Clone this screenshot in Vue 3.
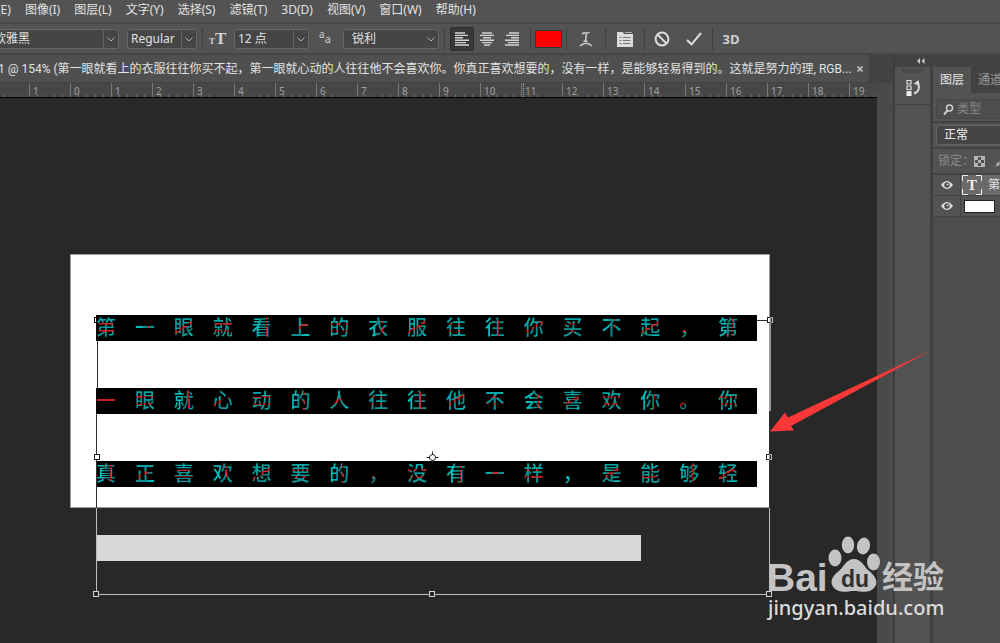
<template>
  <div class="app">
    <nav class="menu-bar">
      <button v-for="m in menus" :key="m" class="menu-item">{{ m }}</button>
    </nav>

    <div class="options-bar">
      <div class="drop family">
        <select aria-label="字体"><option>微软雅黑</option></select>
        <svg class="chevron" viewBox="0 0 8 5"><path d="M0.5 0.5L4 4L7.5 0.5" /></svg>
      </div>
      <div class="drop weight">
        <select aria-label="字体样式"><option>Regular</option></select>
        <svg class="chevron" viewBox="0 0 8 5"><path d="M0.5 0.5L4 4L7.5 0.5" /></svg>
      </div>
      <i class="sep"></i>
      <span class="size-icon"><small>T</small>T</span>
      <div class="drop size">
        <select aria-label="字号"><option>12 点</option></select>
        <svg class="chevron" viewBox="0 0 8 5"><path d="M0.5 0.5L4 4L7.5 0.5" /></svg>
      </div>
      <span class="aa-icon"><sup>a</sup>a</span>
      <div class="drop alias">
        <select aria-label="消除锯齿"><option>锐利</option></select>
        <svg class="chevron" viewBox="0 0 8 5"><path d="M0.5 0.5L4 4L7.5 0.5" /></svg>
      </div>
      <i class="sep"></i>
      <div class="aligns">
        <button v-for="a in aligns" :key="a.name" class="tool" :class="{ active: a.name === align }" :aria-label="a.name" @click="align = a.name">
          <svg width="14" height="14" viewBox="0 0 14 14"><path :d="a.d" stroke="#d4d4d4" stroke-width="1.4" /></svg>
        </button>
      </div>
      <i class="sep"></i>
      <button class="color" aria-label="文本颜色"></button>
      <i class="sep"></i>
      <button class="tool wide" aria-label="变形文字">
        <svg width="14" height="16" viewBox="0 0 14 16" fill="none" stroke="#c8c8c8">
          <path d="M3.5 3.5Q4 1.5 6 2Q9 2.6 10.5 1M7.5 2.2L6.5 10M4.5 10.2H8.5" stroke-width="1.6" />
          <path d="M1 15Q7 9.5 13 15" stroke-width="1.6" />
        </svg>
      </button>
      <i class="sep"></i>
      <button class="tool wide" aria-label="字符面板">
        <svg width="16" height="16" viewBox="0 0 16 16">
          <path d="M0 1H6L7 3H16V16H0Z" fill="#dcdcdc" />
          <path d="M8 1.5H15" stroke="#aaa" />
          <path d="M2.5 6.5H4.5M2.5 9.5H4.5M2.5 12.5H4.5M6 6.5H13.5M6 9.5H13.5M6 12.5H13.5" stroke="#777" />
        </svg>
      </button>
      <i class="sep"></i>
      <div class="commit">
        <button class="tool" aria-label="取消">
          <svg width="16" height="16" viewBox="0 0 16 16" fill="none" stroke="#dcdcdc" stroke-width="2"><circle cx="8" cy="8" r="6.4" /><path d="M3.5 3.5L12.5 12.5" /></svg>
        </button>
        <button class="tool" aria-label="提交">
          <svg width="16" height="14" viewBox="0 0 16 14" fill="none" stroke="#dcdcdc" stroke-width="2"><path d="M1 8L5.5 12.3L15 1" /></svg>
        </button>
      </div>
      <i class="sep"></i>
      <button class="tool three-d">3D</button>
    </div>

    <div class="body">
      <main class="document">
        <div class="doc-tabs">
          <div class="doc-tab">
            <span>{{ title }}</span>
            <button class="close" aria-label="关闭">
              <svg width="6" height="6" viewBox="0 0 6 6"><path d="M0.5 0.5L5.5 5.5M5.5 0.5L0.5 5.5" stroke="#bdbdbd" stroke-width="1.6" /></svg>
            </button>
          </div>
        </div>
        <div class="doc-view">
          <div class="view-main">
            <div class="ruler">
              <div v-for="(n, i) in ticks" :key="i" class="unit">
                <span class="num">{{ n }}</span>
                <i v-for="k in 5" :key="k"></i>
              </div>
              <div class="cursor-mark"></div>
            </div>
            <div class="workspace">
              <div class="artboard"></div>
              <div class="lines">
                <p v-for="(line, r) in lines" :key="r" class="line">
                  <span v-for="(ch, c) in line" :key="c" :class="tone(r, c)">{{ ch }}</span>
                </p>
                <p class="line rest"></p>
              </div>
              <svg class="bounds" width="700" height="290" viewBox="80 310 700 290" fill="none">
                <path d="M97.5 340V388M96.5 414V508M757 320.5H770M769.5 411V508" stroke="#303030" />
                <path d="M770.5 320V411" stroke="#999" />
                <path d="M96.5 508V594.5H769.5V508" stroke="#bdbdbd" />
                <path d="M97 317.5H94.5V322.5H97" stroke="#000" />
                <g stroke="#222" fill="#fff">
                  <rect x="94.5" y="454.5" width="5" height="5" />
                  <rect x="766.5" y="454.5" width="5" height="5" />
                  <rect x="767.5" y="317.5" width="5" height="5" />
                </g>
                <path d="M769.5 454.5H771.5V459.5H769.5M770.5 317.5H772.5V322.5H770.5" stroke="#c4c4c4" fill="#282828" />
                <g stroke="#d0d0d0" fill="#282828">
                  <rect x="93.5" y="591.5" width="5" height="5" />
                  <rect x="429.5" y="591.5" width="5" height="5" />
                  <rect x="766.5" y="591.5" width="5" height="5" />
                </g>
                <circle cx="432.5" cy="457.5" r="3" stroke="#222" fill="#fff" />
                <path d="M426.5 457.5H430M435 457.5H438.5M432.5 451.5V455M432.5 460V463.5" stroke="#222" />
              </svg>
            </div>
          </div>
          <div class="scroll-track"></div>
        </div>
      </main>

      <aside class="side">
        <div class="side-head">
          <button aria-label="折叠面板">
            <svg width="8" height="6" viewBox="0 0 8 6" fill="#c8c8c8"><path d="M3 0V6L0 3ZM7.5 0V6L4.5 3Z" /></svg>
          </button>
        </div>
        <div class="side-body">
          <div class="dock">
            <div class="grip"></div>
            <button class="history" aria-label="历史记录">
              <svg width="15" height="18" viewBox="0 0 15 18" fill="none" stroke="#dcdcdc">
                <path d="M1 1.5H5V5H1ZM1 7H5V10.5H1Z" stroke-width="1.2" />
                <path d="M0.5 12H5.5V17H0.5Z" fill="#eee" stroke="none" />
                <path d="M8 14.5Q15 12 12 4" stroke-width="2" />
                <path d="M7.5 5L12.5 1L13.5 6Z" fill="#dcdcdc" stroke="none" />
              </svg>
            </button>
          </div>
          <section class="panel">
            <div class="panel-tabs">
              <button class="on">图层</button>
              <button>通道</button>
            </div>
            <div class="row filter">
              <label class="search">
                <svg width="11" height="11" viewBox="0 0 11 11" fill="none" stroke="#d0d0d0"><circle cx="6.5" cy="4" r="3" stroke-width="1.5" /><path d="M4.5 6.5L1 10.5" stroke-width="2" /></svg>
                <input aria-label="筛选图层" placeholder="类型" />
              </label>
            </div>
            <div class="row blend">
              <select aria-label="混合模式"><option>正常</option></select>
            </div>
            <div class="row lock">
              <span>锁定：</span>
              <svg width="11" height="11" viewBox="0 0 11 11" fill="#b4b4b4">
                <path d="M0 0H11V11H0ZM1 1V10H10V1Z" fill-rule="evenodd" />
                <path d="M1 1H4V4H1ZM7 1H10V4H7ZM4 4H7V7H4ZM1 7H4V10H1ZM7 7H10V10H7Z" />
              </svg>
              <svg class="brush" width="12" height="11" viewBox="0 0 12 11" fill="#a8a8a8"><path d="M0 10Q3 10 2.5 7.5Q4 5 6 7.5Q6 11 0 10ZM5 6L11 0L12 1L7 7.5Z" /></svg>
            </div>
            <div v-for="l in layers" :key="l.name" class="layer" :class="{ selected: l.text }">
              <button class="eye" aria-label="显示图层">
                <svg width="12" height="8" viewBox="0 0 12 8"><path d="M0 4Q6 -4 12 4Q6 12 0 4Z" fill="#dcdcdc" /><circle cx="6" cy="4" r="2.7" fill="#4a4a4a" /><circle cx="6.5" cy="3.5" r="1" fill="#dcdcdc" /></svg>
              </button>
              <div class="layer-main">
                <span v-if="l.text" class="type-thumb">
                  T
                  <svg class="corners" viewBox="0 0 20 20" fill="none" stroke="#eee"><path d="M0.5 6V0.5H6M14 0.5H19.5V6M19.5 14V19.5H14M6 19.5H0.5V14" /></svg>
                </span>
                <span v-else class="thumb"></span>
                <span class="name">{{ l.name }}</span>
              </div>
            </div>
          </section>
        </div>
      </aside>
    </div>

    <svg class="arrow" width="162" height="84" viewBox="770 349 162 84"><path d="M770 431.5L785 412.5L788 417.5L931 350.5L791 426L794 430.5Z" fill="#fb3838" /></svg>

    <svg class="watermark" width="182" height="90" viewBox="765 533 182 90" fill="#c3c3c3">
      <text x="767" y="591" class="wm-latin">Bai</text>
      <ellipse cx="835" cy="558" rx="6.5" ry="8.5" />
      <ellipse cx="848" cy="545" rx="6.2" ry="8.5" />
      <ellipse cx="863.5" cy="546" rx="6.5" ry="8.5" transform="rotate(12 863.5 546)" />
      <ellipse cx="873.5" cy="562" rx="6.5" ry="8.5" />
      <path d="M854 559C861 559 864 566 868 570C876 576 879 583 874 588C869 594 861 591 854 591C847 591 840 594 834 588C829 582 832 576 840 570C844 566 847 559 854 559Z" />
      <text x="841" y="587" class="wm-du">du</text>
      <text x="882" y="588" class="wm-cn">经验</text>
      <text x="768" y="615" class="wm-url">jingyan.baidu.com</text>
    </svg>
  </div>
</template>

<script setup>
import { ref } from 'vue'

const menus = ['编辑(E)', '图像(I)', '图层(L)', '文字(Y)', '选择(S)', '滤镜(T)', '3D(D)', '视图(V)', '窗口(W)', '帮助(H)']

const title = '1 @ 154% (第一眼就看上的衣服往往你买不起，第一眼就心动的人往往他不会喜欢你。你真正喜欢想要的，没有一样，是能够轻易得到的。这就是努力的理, RGB...'

const align = ref('左对齐')
const aligns = [
  { name: '左对齐', d: 'M0 1H10M0 3.4H13M0 5.8H8M0 8.2H14M0 10.6H11M0 13H14' },
  { name: '居中对齐', d: 'M2 1H12M0 3.4H14M3 5.8H11M0 8.2H14M2 10.6H12M4 13H10' },
  { name: '右对齐', d: 'M4 1H14M1 3.4H14M6 5.8H14M0 8.2H14M3 10.6H14M0 13H14' },
]

// the ruler starts left of the document origin
const ticks = [2, 1, ...Array.from({ length: 20 }, (_, i) => i)]

const lines = ['第一眼就看上的衣服往往你买不起，第', '一眼就心动的人往往他不会喜欢你。你', '真正喜欢想要的，没有一样，是能够轻']

const layers = [
  { name: '第一眼就看上', text: true },
  { name: '背景', text: false },
]

function tone(row, col) {
  if (row === 1 && col === 0) return 'red'
  return ['mix-a', 'mix-b', 'mix-c'][(row * 2 + col) % 3]
}
</script>

<style>
body {
  background: #535353;
}
</style>

<style scoped>
.app {
  position: relative;
  display: flex;
  flex-direction: column;
  min-height: 100vh;
  overflow: hidden;
  background: #535353;
  color: #e2e2e2;
  font-family: "Noto Sans", "Noto Sans CJK SC", sans-serif;
  font-size: 12px;
  line-height: 16px;
}

button,
select,
input {
  margin: 0;
  padding: 0;
  border: 0;
  background: none;
  color: inherit;
  font: inherit;
  outline: none;
}

svg {
  display: block;
  flex: none;
}

.menu-bar {
  display: flex;
  gap: 14px;
  height: 22px;
  margin-left: -27px;
  padding-bottom: 3px;
  box-sizing: border-box;
}

.menu-item {
  white-space: nowrap;
}

.options-bar {
  display: flex;
  align-items: center;
  height: 33px;
  box-sizing: border-box;
  border-top: 2px solid #454545;
  border-bottom: 2px solid #454545;
}

.drop {
  position: relative;
  height: 20px;
  box-sizing: border-box;
  border: 1px solid #666;
  border-radius: 3px;
  background: #454545;
  flex: none;
}

.drop select {
  width: 100%;
  height: 18px;
  padding-left: 3px;
  appearance: none;
}

.chevron {
  position: absolute;
  top: 7px;
  right: 3px;
  width: 8px;
  height: 5px;
  fill: none;
  stroke: #b0b0b0;
}

.drop::after {
  content: "";
  position: absolute;
  top: 0;
  bottom: 0;
  right: 14px;
  border-left: 1px solid #606060;
}

.family {
  width: 141px;
  margin: 0 8px 0 -22px;
}

.weight {
  width: 70px;
  margin-right: 5px;
}

.size {
  width: 75px;
  margin-right: 10px;
}

.alias {
  width: 96px;
  margin-right: 5px;
}

.alias select {
  padding-left: 8px;
}

.alias::after {
  display: none;
}

.sep {
  width: 1px;
  height: 22px;
  flex: none;
  background: #3e3e3e;
}

.size-icon {
  width: 25px;
  margin-left: 6px;
  color: #d0d0d0;
  font: bold 17px "Liberation Serif", serif;
  white-space: nowrap;
}

.size-icon small {
  font-size: 9px;
}

.aa-icon {
  width: 14px;
  margin-right: 10px;
  color: #d0d0d0;
  white-space: nowrap;
  font-size: 11px;
}

.aa-icon sup {
  font-size: 10px;
  line-height: 0;
}

.aligns {
  display: flex;
  gap: 1px;
  margin: 0 6px 0 5px;
}

.tool {
  display: flex;
  align-items: center;
  justify-content: center;
  width: 24px;
  height: 24px;
  box-sizing: border-box;
  flex: none;
}

.tool.active {
  border: 1px solid #2f2f2f;
  border-radius: 2px;
  background: #383838;
}

.tool.wide {
  width: 38px;
}

.color {
  width: 27px;
  height: 18px;
  margin: 0 4px;
  border: 1px solid #333;
  background: #f00;
  flex: none;
}

.commit {
  display: flex;
  gap: 8px;
  margin: 0 6px 0 5px;
}

.three-d {
  width: 36px;
  color: #d0d0d0;
  font: bold 13px "Open Sans", sans-serif;
}

.body {
  display: flex;
  flex: 1;
}

.document {
  display: flex;
  flex-direction: column;
  flex: 1;
  min-width: 0;
  border-right: 2px solid #3d3d3d;
}

.doc-tabs {
  display: flex;
  height: 28px;
  background: #424242;
}

.doc-tab {
  display: flex;
  align-items: center;
  gap: 6px;
  height: 27px;
  margin-left: -2px;
  padding-right: 6px;
  background: #4f4f4f;
  font-family: Roboto, "Noto Sans CJK SC", sans-serif;
  white-space: nowrap;
}

.doc-view {
  display: flex;
  flex: 1;
}

.view-main {
  display: flex;
  flex-direction: column;
  flex: 1;
  min-width: 0;
}

.ruler {
  position: relative;
  display: flex;
  height: 15px;
  box-sizing: border-box;
  overflow: hidden;
  border-bottom: 1px solid #000;
  background: #474747;
}

.unit {
  position: relative;
  display: flex;
  align-items: flex-end;
  width: 41px;
  flex: none;
}

.unit:first-child {
  margin-left: -12px;
}

.unit i {
  flex: 1;
  height: 2px;
  border-left: 1px solid #777;
}

.unit .num + i {
  height: 14px;
}

.num {
  position: absolute;
  left: 4px;
  top: 1px;
  color: #a0a0a0;
  font-size: 10px;
  line-height: 15px;
}

.cursor-mark {
  position: absolute;
  top: 0;
  left: 523px;
  height: 14px;
  border-left: 1px dotted #aaa;
}

.workspace {
  position: relative;
  flex: 1;
  overflow: hidden;
  background: #282828;
}

.artboard {
  position: absolute;
  left: 70px;
  top: 156px;
  width: 700px;
  height: 254px;
  box-sizing: border-box;
  border: 1px solid #999;
  background: #fff;
}

.lines {
  position: absolute;
  left: 96px;
  top: 217px;
  width: 661px;
}

.line {
  display: grid;
  grid-template-columns: repeat(17, 1fr);
  height: 26px;
  margin: 0 0 47px;
  background: #000;
  font-family: "Noto Sans CJK SC", sans-serif;
  font-size: 20px;
  font-weight: 500;
  line-height: 24px;
}

.line.rest {
  width: 545px;
  margin-top: 48px;
  background: #d7d7d7;
}

.line span {
  background-clip: text;
  -webkit-background-clip: text;
  color: transparent;
}

.red {
  background-color: #c52020;
}

.mix-a {
  background-image: linear-gradient(#0aa 0 8px, #c52a2a 8px 10px, #099 10px 15px, #c52a2a 15px 17px, #0a9a9a 17px);
}

.mix-b {
  background-image: linear-gradient(90deg, #0bb 0 8px, #0a8a8a 8px 13px, #c52a2a 13px 15px, #099 15px);
}

.mix-c {
  background-image: linear-gradient(150deg, #00a5a5 0 14px, #c52a2a 14px 17px, #0a9090 17px 24px, #0bb 24px);
}

.bounds {
  position: absolute;
  left: 80px;
  top: 212px;
}

.scroll-track {
  width: 16px;
  background: #4a4a4a;
}

.side {
  display: flex;
  flex-direction: column;
  width: 105px;
  flex: none;
}

.side-head {
  display: flex;
  height: 12px;
  padding-left: 22px;
  background: #424242;
}

.side-body {
  display: flex;
  flex: 1;
}

.dock {
  width: 35px;
  border-right: 3px solid #404040;
  flex: none;
}

.grip {
  height: 4px;
  margin: 2px 8px 6px;
  background: repeating-linear-gradient(90deg, #424242 0 1px, #535353 1px 2px);
}

.history {
  display: flex;
  justify-content: center;
  width: 100%;
  height: 26px;
  padding-left: 2px;
  box-sizing: border-box;
  border-bottom: 1px solid #404040;
}

.panel {
  flex: 1;
  min-width: 0;
  overflow: hidden;
  background: #4d4d4d;
}

.panel-tabs {
  display: flex;
  height: 26px;
  background: #424242;
}

.panel-tabs button {
  width: 38px;
  flex: none;
  color: #999;
}

.panel-tabs .on {
  background: #535353;
  color: #e6e6e6;
}

.row {
  display: flex;
  align-items: center;
  box-sizing: border-box;
  height: 26px;
  padding-left: 3px;
  border-bottom: 2px solid #434343;
  background: #535353;
  white-space: nowrap;
}

.row.filter {
  height: 30px;
  padding-top: 4px;
}

.search {
  display: flex;
  align-items: center;
  gap: 3px;
  height: 20px;
  padding-left: 6px;
  box-sizing: border-box;
  border: 1px solid #474747;
  border-radius: 3px;
  background: #4e4e4e;
}

.search input {
  width: 60px;
}

.search input::placeholder {
  color: #888;
  opacity: 1;
}

.blend select {
  width: 90px;
  height: 20px;
  padding-left: 7px;
  flex: none;
  appearance: none;
  border: 1px solid #666;
  border-radius: 3px;
  background: #454545;
  color: #f0f0f0;
}

.lock {
  padding-left: 5px;
  color: #8c8c8c;
}

.brush {
  margin-left: 9px;
}

.layer {
  display: flex;
  height: 20px;
  border-bottom: 1px solid #434343;
  white-space: nowrap;
}

.eye {
  display: flex;
  align-items: center;
  justify-content: center;
  width: 28px;
  flex: none;
  border-right: 1px solid #434343;
  background: #535353;
}

.layer-main {
  display: flex;
  align-items: center;
  gap: 6px;
  flex: 1;
  padding-left: 1px;
  background: #535353;
}

.selected .layer-main {
  background: #6a6a6a;
}

.type-thumb {
  position: relative;
  width: 20px;
  height: 20px;
  flex: none;
  color: #eee;
  font: bold 15px "Liberation Serif", serif;
  line-height: 20px;
  text-align: center;
}

.corners {
  position: absolute;
  inset: 0;
}

.thumb {
  width: 29px;
  height: 11px;
  margin-left: 2px;
  border: 1px solid #222;
  background: #fff;
  flex: none;
}

.arrow {
  position: absolute;
  left: 770px;
  top: 349px;
  pointer-events: none;
}

.watermark {
  position: absolute;
  right: 53px;
  bottom: 20px;
  pointer-events: none;
}

.wm-latin {
  font: bold 39px "Liberation Sans", sans-serif;
}

.wm-du {
  fill: #303030;
  font: bold 23px "Liberation Sans", sans-serif;
}

.wm-cn {
  font: bold 31px "Noto Sans CJK SC", sans-serif;
}

.wm-url {
  fill: #dcdcdc;
  font: 500 20px "Noto Sans", sans-serif;
}
</style>
